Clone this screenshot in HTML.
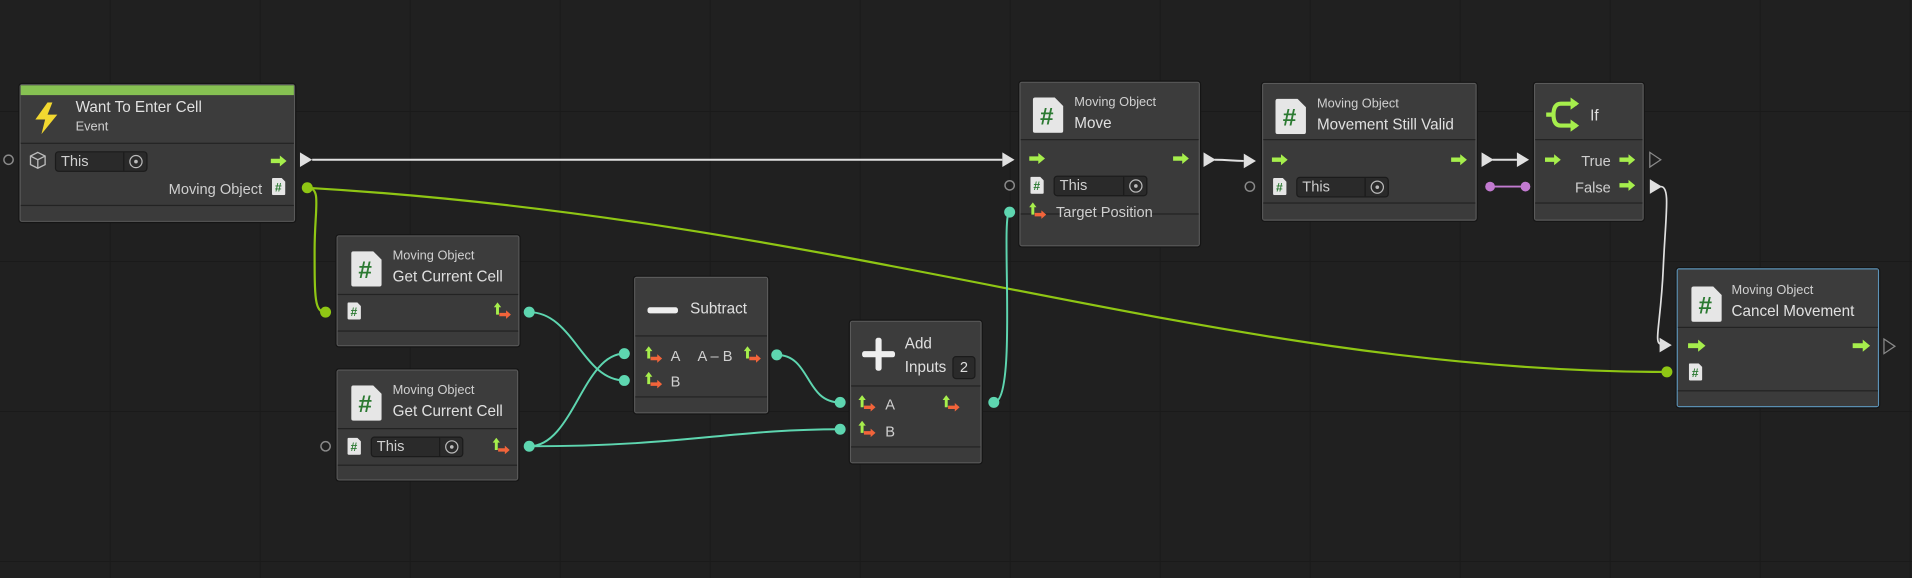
<!DOCTYPE html>
<html><head><meta charset="utf-8"><style>
*{margin:0;padding:0;box-sizing:border-box}
html,body{width:1912px;height:578px;overflow:hidden;background:#202020}
#c{position:absolute;left:0;top:0;width:1568px;height:474px;transform:scale(1.219388);transform-origin:0 0;
background-color:#202020;
background-image:linear-gradient(to right,#1a1a1a 1px,transparent 1px),linear-gradient(to bottom,#1a1a1a 1px,transparent 1px);
background-size:123px 123px;background-position:90px 91px;
font-family:"Liberation Sans",sans-serif;color:#d4d4d4}
.n{position:absolute;background:#3a3a3a;border:1px solid #5a5a5a;border-radius:2px;box-shadow:0 0 0 1px #151515}
.hd{position:absolute;left:0;right:0;top:0;background:#3c3c3c;border-bottom:1px solid #232323}
.ft{position:absolute;left:0;right:0;bottom:0;background:#3b3b3b;border-top:1px solid #232323}
.t{position:absolute;white-space:nowrap;line-height:1}
.s{font-size:10.5px;color:#d0d0d0}
.m{font-size:12.5px;color:#e0e0e0}
.b{font-size:12px;color:#cfcfcf}
.ic{position:absolute}
.fld{position:absolute;height:17px;background:#2a2a2a;border:1px solid #1b1b1b;border-radius:3px;font-size:12px;color:#cfcfcf;padding-left:4px;line-height:15px}
.fld i{position:absolute;right:0;top:0;width:19px;height:15px;border-left:1px solid #1b1b1b}
.fld i:after{content:"";position:absolute;left:4px;top:2px;width:9px;height:9px;border:1.3px solid #bbb;border-radius:50%}
.fld i:before{content:"";position:absolute;left:8px;top:6px;width:3px;height:3px;background:#bbb;border-radius:50%}
svg.w{position:absolute;left:0;top:0}
</style></head><body><div id="c">

<svg class="w" width="1568" height="474" viewBox="0 0 1568 474">
<defs>
<symbol id="fa" viewBox="0 0 13 10"><path d="M0,3.2h7.5V0.5L13,5L7.5,9.5V6.8H0z" fill="#a6ee4c"/></symbol>
<symbol id="va" viewBox="0 0 14 14"><path d="M3,0L6,4H4.2V10H1.8V4H0z" fill="#a6ee4c"/><path d="M4.5,8.6H10V6.5L14,10L10,13.5V11.4H4.5z" fill="#f2643a"/></symbol>
<symbol id="hd" viewBox="0 0 25 29"><path d="M2,0H18L25,7V27Q25,29 23,29H2Q0,29 0,27V2Q0,0 2,0z" fill="#e6e6e6"/><text x="11.5" y="22" font-family="Liberation Sans" font-size="20" font-weight="bold" fill="#2c7a32" text-anchor="middle">#</text></symbol>
<symbol id="hs" viewBox="0 0 11 14"><path d="M1,0H8L11,3V13Q11,14 10,14H1Q0,14 0,13V1Q0,0 1,0z" fill="#e6e6e6"/><text x="5.2" y="11" font-family="Liberation Sans" font-size="10" font-weight="bold" fill="#2c7a32" text-anchor="middle">#</text></symbol>
</defs>
<!-- flow wires -->
<path d="M256,131H822" stroke="#e0e0e0" stroke-width="1.6" fill="none"/>
<path d="M246,125L256,131L246,137z" fill="#e0e0e0"/>
<path d="M822,125L832,131L822,137z" fill="#e0e0e0"/>
<path d="M996,131C1008,131 1010,132 1020,132" stroke="#e0e0e0" stroke-width="1.6" fill="none"/>
<path d="M987,125L997,131L987,137z" fill="#e0e0e0"/><path d="M1020,126L1030,132L1020,138z" fill="#e0e0e0"/>
<path d="M1224,131H1244" stroke="#e0e0e0" stroke-width="1.6" fill="none"/>
<path d="M1215,125L1225,131L1215,137z" fill="#e0e0e0"/><path d="M1244,125L1254,131L1244,137z" fill="#e0e0e0"/>
<path d="M1353,125L1362,131L1353,137z" fill="none" stroke="#8a8a8a" stroke-width="1"/>
<path d="M1353,147L1363,153L1353,159z" fill="#e0e0e0"/>
<path d="M1362,153C1370,153 1366,175 1364,220C1362,265 1356,282 1362,282" stroke="#e0e0e0" stroke-width="1.4" fill="none"/>
<path d="M1361,277L1371,283L1361,289z" fill="#e0e0e0"/>
<path d="M1545,278L1554,284L1545,290z" fill="none" stroke="#8a8a8a" stroke-width="1"/>
<!-- purple -->
<path d="M1222,153H1251" stroke="#c27ad0" stroke-width="1.6"/>
<circle cx="1222" cy="153" r="4" fill="#c27ad0"/><circle cx="1251" cy="153" r="4" fill="#c27ad0"/>
<circle cx="1196" cy="153" r="4.5" fill="#a78de8"/><circle cx="1271" cy="153" r="4.5" fill="#a78de8"/>
<!-- green object wires -->
<path d="M252,154C700,180 1000,305 1367,305" stroke="#8fc614" stroke-width="1.8" fill="none"/>
<path d="M252,154C264,154 258,170 258,205C258,245 258,256 267,256" stroke="#8fc614" stroke-width="1.8" fill="none"/>
<circle cx="252" cy="154" r="4.5" fill="#8fc614"/><circle cx="267" cy="256" r="4.5" fill="#8fc614"/><circle cx="1367" cy="305" r="4.5" fill="#8fc614"/>
<!-- cyan wires -->
<g stroke="#5ed6b0" stroke-width="1.6" fill="none">
<path d="M434,256C470,256 478,312 512,312"/>
<path d="M434,366C470,366 478,290 512,290"/>
<path d="M434,366C560,366 600,352 689,352"/>
<path d="M637,291C665,291 660,330 689,330"/>
<path d="M815,330C835,330 820,174 828,174"/>
</g>
<g fill="#5ed6b0">
<circle cx="434" cy="256" r="4.5"/><circle cx="434" cy="366" r="4.5"/><circle cx="512" cy="290" r="4.5"/><circle cx="512" cy="312" r="4.5"/>
<circle cx="637" cy="291" r="4.5"/><circle cx="689" cy="330" r="4.5"/><circle cx="689" cy="352" r="4.5"/><circle cx="815" cy="330" r="4.5"/><circle cx="828" cy="174" r="4.5"/>
</g>
<g fill="none" stroke="#8a8a8a" stroke-width="1.2">
<circle cx="7" cy="131" r="3.8"/><circle cx="267" cy="366" r="3.8"/><circle cx="828" cy="152" r="3.8"/><circle cx="1025" cy="153" r="3.8"/>
</g>
</svg>

<!-- Node 1 -->
<div class="n" style="left:16px;top:69px;width:226px;height:113px">
 <div class="hd" style="height:48px;border-top:8px solid #86c152"></div>
 <div class="ft" style="height:13px"></div>
 <svg class="ic" style="left:10px;top:14px" width="22" height="26" viewBox="0 0 22 26"><path d="M12,0L2,14H10L7,26L20,10H12L16,0z" fill="#f2d830"/></svg>
 <div class="t m" style="left:45px;top:12px">Want To Enter Cell</div>
 <div class="t s" style="left:45px;top:29px">Event</div>
 <svg class="ic" style="left:7px;top:54px" width="14" height="15" viewBox="0 0 14 15"><path d="M7,1L13,4V11L7,14L1,11V4z M1,4L7,7L13,4 M7,7V14" fill="none" stroke="#bbb" stroke-width="1.1"/></svg>
 <div class="fld" style="left:28px;top:54px;width:76px">This<i></i></div>
 <svg class="ic" style="left:205px;top:57px" width="13" height="10"><use href="#fa"/></svg>
 <div class="t b" style="right:26px;top:79px">Moving Object</div>
 <svg class="ic" style="left:206px;top:76px" width="11" height="14"><use href="#hs"/></svg>
</div>

<!-- GCC1 -->
<div class="n" style="left:276px;top:193px;width:150px;height:91px">
 <div class="hd" style="height:48px"></div><div class="ft" style="height:12px"></div>
 <svg class="ic" style="left:11px;top:12px" width="25" height="29"><use href="#hd"/></svg>
 <div class="t s" style="left:45px;top:11px">Moving Object</div>
 <div class="t m" style="left:45px;top:27px">Get Current Cell</div>
 <svg class="ic" style="left:8px;top:54px" width="11" height="14"><use href="#hs"/></svg>
 <svg class="ic" style="left:128px;top:54px" width="14" height="14"><use href="#va"/></svg>
</div>

<!-- GCC2 -->
<div class="n" style="left:276px;top:303px;width:149px;height:91px">
 <div class="hd" style="height:48px"></div><div class="ft" style="height:12px"></div>
 <svg class="ic" style="left:11px;top:12px" width="25" height="29"><use href="#hd"/></svg>
 <div class="t s" style="left:45px;top:11px">Moving Object</div>
 <div class="t m" style="left:45px;top:27px">Get Current Cell</div>
 <svg class="ic" style="left:8px;top:55px" width="11" height="14"><use href="#hs"/></svg>
 <div class="fld" style="left:27px;top:54px;width:76px">This<i></i></div>
 <svg class="ic" style="left:127px;top:55px" width="14" height="14"><use href="#va"/></svg>
</div>

<!-- Subtract -->
<div class="n" style="left:520px;top:227px;width:110px;height:112px">
 <div class="hd" style="height:48px"></div><div class="ft" style="height:13px"></div>
 <div class="ic" style="left:10px;top:24px;width:25px;height:5px;background:#eee;border-radius:2px"></div>
 <div class="t m" style="left:45px;top:19px">Subtract</div>
 <svg class="ic" style="left:8px;top:56px" width="14" height="14"><use href="#va"/></svg>
 <div class="t b" style="left:29px;top:58px">A</div>
 <div class="t b" style="left:51px;top:58px">A – B</div>
 <svg class="ic" style="left:89px;top:56px" width="14" height="14"><use href="#va"/></svg>
 <svg class="ic" style="left:8px;top:77px" width="14" height="14"><use href="#va"/></svg>
 <div class="t b" style="left:29px;top:79px">B</div>
</div>

<!-- Add -->
<div class="n" style="left:697px;top:263px;width:108px;height:117px">
 <div class="hd" style="height:53px"></div><div class="ft" style="height:13px"></div>
 <div class="ic" style="left:9px;top:24px;width:27px;height:5px;background:#eee;border-radius:2px"></div>
 <div class="ic" style="left:20px;top:13px;width:5px;height:27px;background:#eee;border-radius:2px"></div>
 <div class="t m" style="left:44px;top:12px">Add</div>
 <div class="t m" style="left:44px;top:31px">Inputs</div>
 <div class="ic" style="left:83px;top:28px;width:19px;height:19px;background:#2a2a2a;border:1px solid #1b1b1b;border-radius:3px;font-size:12px;line-height:17px;text-align:center;color:#ddd">2</div>
 <svg class="ic" style="left:6px;top:60px" width="14" height="14"><use href="#va"/></svg>
 <div class="t b" style="left:28px;top:62px">A</div>
 <svg class="ic" style="left:75px;top:60px" width="14" height="14"><use href="#va"/></svg>
 <svg class="ic" style="left:6px;top:81px" width="14" height="14"><use href="#va"/></svg>
 <div class="t b" style="left:28px;top:84px">B</div>
</div>

<!-- Move -->
<div class="n" style="left:836px;top:67px;width:148px;height:135px">
 <div class="hd" style="height:47px"></div><div class="ft" style="height:26px"></div>
 <svg class="ic" style="left:10px;top:12px" width="25" height="29"><use href="#hd"/></svg>
 <div class="t s" style="left:44px;top:11px">Moving Object</div>
 <div class="t m" style="left:44px;top:27px">Move</div>
 <svg class="ic" style="left:7px;top:57px" width="13" height="10"><use href="#fa"/></svg>
 <svg class="ic" style="left:125px;top:57px" width="13" height="10"><use href="#fa"/></svg>
 <svg class="ic" style="left:8px;top:77px" width="11" height="14"><use href="#hs"/></svg>
 <div class="fld" style="left:27px;top:76px;width:77px">This<i></i></div>
 <svg class="ic" style="left:7px;top:98px" width="14" height="14"><use href="#va"/></svg>
 <div class="t b" style="left:29px;top:100px">Target Position</div>
</div>

<!-- Movement Still Valid -->
<div class="n" style="left:1035px;top:68px;width:176px;height:113px">
 <div class="hd" style="height:46px"></div><div class="ft" style="height:14px"></div>
 <svg class="ic" style="left:10px;top:12px" width="25" height="29"><use href="#hd"/></svg>
 <div class="t s" style="left:44px;top:11px">Moving Object</div>
 <div class="t m" style="left:44px;top:27px">Movement Still Valid</div>
 <svg class="ic" style="left:7px;top:57px" width="13" height="10"><use href="#fa"/></svg>
 <svg class="ic" style="left:154px;top:57px" width="13" height="10"><use href="#fa"/></svg>
 <svg class="ic" style="left:8px;top:77px" width="11" height="14"><use href="#hs"/></svg>
 <div class="fld" style="left:27px;top:76px;width:76px">This<i></i></div>
</div>

<!-- If -->
<div class="n" style="left:1258px;top:68px;width:90px;height:113px">
 <div class="hd" style="height:46px"></div><div class="ft" style="height:14px"></div>
 <svg class="ic" style="left:7px;top:11px" width="30" height="28" viewBox="0 0 30 28"><g fill="none" stroke="#a6ee4c" stroke-width="3.4"><path d="M27,5H14Q8,5 8,14Q8,23 14,23H27"/><path d="M2,14H8"/></g><path d="M22,0L29,5L22,10z M22,18L29,23L22,28z" fill="#a6ee4c"/></svg>
 <div class="t m" style="left:45px;top:20px">If</div>
 <svg class="ic" style="left:8px;top:57px" width="13" height="10"><use href="#fa"/></svg>
 <div class="t b" style="right:26px;top:57px">True</div>
 <svg class="ic" style="left:69px;top:57px" width="13" height="10"><use href="#fa"/></svg>
 <div class="t b" style="right:26px;top:79px">False</div>
 <svg class="ic" style="left:69px;top:78px" width="13" height="10"><use href="#fa"/></svg>
</div>

<!-- Cancel Movement -->
<div class="n" style="left:1375px;top:220px;width:166px;height:114px;border-color:#5d93b8">
 <div class="hd" style="height:48px"></div><div class="ft" style="height:13px"></div>
 <svg class="ic" style="left:11px;top:14px" width="25" height="29"><use href="#hd"/></svg>
 <div class="t s" style="left:44px;top:12px">Moving Object</div>
 <div class="t m" style="left:44px;top:28px">Cancel Movement</div>
 <svg class="ic" style="left:8px;top:57px" width="15" height="11"><use href="#fa"/></svg>
 <svg class="ic" style="left:143px;top:57px" width="15" height="11"><use href="#fa"/></svg>
 <svg class="ic" style="left:9px;top:77px" width="11" height="14"><use href="#hs"/></svg>
</div>

</div></body></html>
